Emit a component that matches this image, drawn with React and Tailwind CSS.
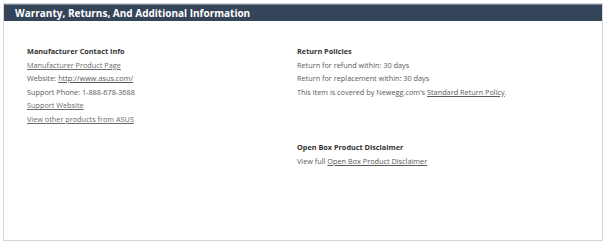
export default function App() {
  const font = { fontFamily: '"Open Sans", sans-serif' };
  return (
    <div className="w-[614px] h-[250px] bg-white" style={font}>
      <div className="ml-[3px] mt-[3px] w-[600px] h-[238px] border border-[#d6d6d6] bg-white flex flex-col">
        <div className="h-[17px] bg-[#344459] border-t border-[#7a8595] flex items-center pl-[11px]">
          <span className="text-white font-bold text-[10px] leading-none">Warranty, Returns, And Additional Information</span>
        </div>
        <div className="flex pt-[24px] pl-[23px]">
          <div className="w-[270px] flex flex-col text-[7.3px] leading-[13.6px] text-[#5a5a5a]">
            <div className="font-bold text-[#333]">Manufacturer Contact Info</div>
            <div><span className="underline text-[#6a6a6a]">Manufacturer Product Page</span></div>
            <div>Website: <span className="underline">http://www.asus.com/</span></div>
            <div>Support Phone: 1-888-678-3688</div>
            <div><span className="underline text-[#6a6a6a]">Support Website</span></div>
            <div><span className="underline text-[#6a6a6a]">View other products from ASUS</span></div>
          </div>
          <div className="flex flex-col text-[7.3px] leading-[13.6px] text-[#5a5a5a]">
            <div className="font-bold text-[#333]">Return Policies</div>
            <div>Return for refund within: 30 days</div>
            <div>Return for replacement within: 30 days</div>
            <div>This item is covered by Newegg.com's <span className="underline">Standard Return Policy</span>.</div>
            <div className="mt-[42px] font-bold text-[#333]">Open Box Product Disclaimer</div>
            <div>View full <span className="underline">Open Box Product Disclaimer</span></div>
          </div>
        </div>
      </div>
    </div>
  );
}
